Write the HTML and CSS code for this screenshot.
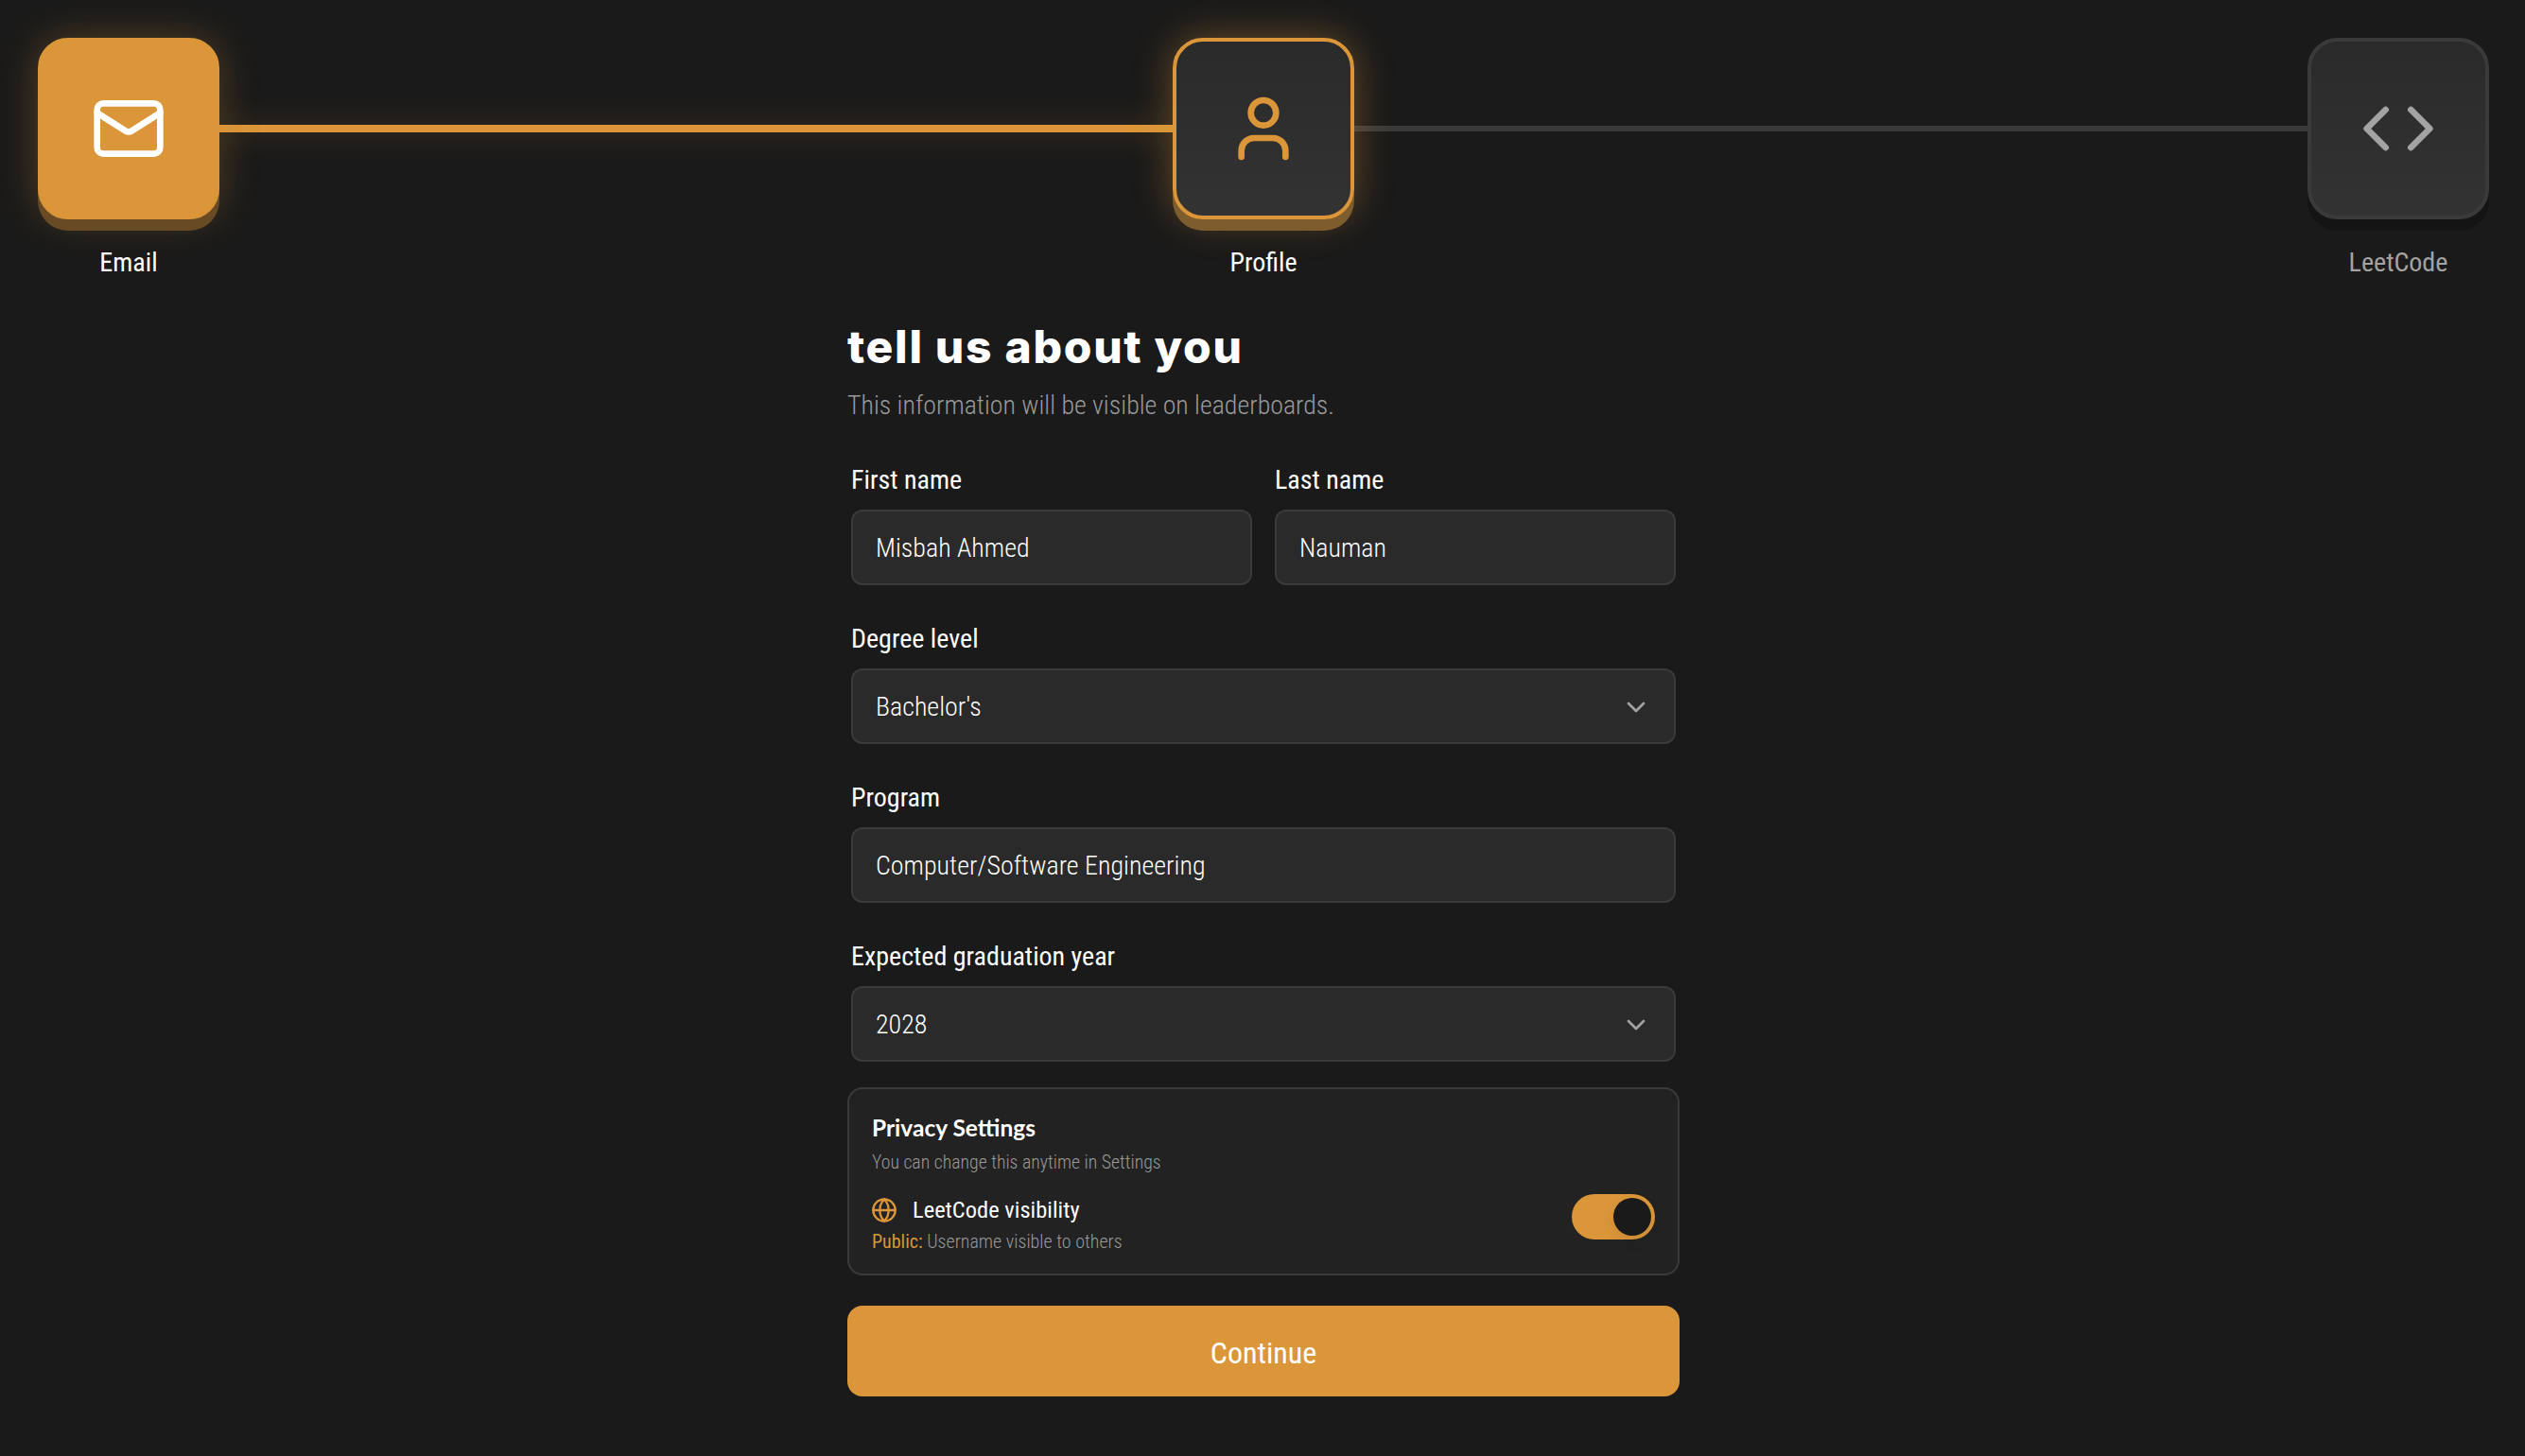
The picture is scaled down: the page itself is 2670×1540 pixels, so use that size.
FILE: index.html
```html
<!DOCTYPE html>
<html lang="en">
<head>
  <meta charset="UTF-8">
  <title>Onboarding</title>
  <link rel="stylesheet" href="styles.css">
</head>
<body>

<!-- Stepper -->
<div class="stepper">
  <div class="step done">
    <div class="step-box">
      <svg class="step-icon" viewBox="0 0 24 24"><rect width="20" height="16" x="2" y="4" rx="2"/><path d="m22 7-8.97 5.7a1.94 1.94 0 0 1-2.06 0L2 7"/></svg>
    </div>
    <div class="step-label">Email</div>
  </div>
  <div class="step-line active"></div>
  <div class="step current">
    <div class="step-box">
      <svg class="step-icon" viewBox="0 0 24 24"><path d="M19 21v-2a4 4 0 0 0-4-4H9a4 4 0 0 0-4 4v2"/><circle cx="12" cy="7" r="4"/></svg>
    </div>
    <div class="step-label">Profile</div>
  </div>
  <div class="step-line"></div>
  <div class="step">
    <div class="step-box">
      <svg class="step-icon" viewBox="0 0 24 24"><polyline points="16 18 22 12 16 6"/><polyline points="8 6 2 12 8 18"/></svg>
    </div>
    <div class="step-label">LeetCode</div>
  </div>
</div>

<div class="form-wrap">
  <h1>tell us about you</h1>
  <p class="subtitle">This information will be visible on leaderboards.</p>

  <div class="fields">
    <div class="field-row">
      <div class="field">
        <label>First name</label>
        <div class="input">Misbah Ahmed</div>
      </div>
      <div class="field">
        <label>Last name</label>
        <div class="input">Nauman</div>
      </div>
    </div>

    <div class="field">
      <label>Degree level</label>
      <div class="input select">
        Bachelor's
        <svg class="chevron" viewBox="0 0 24 24"><path d="m6 9 6 6 6-6"/></svg>
      </div>
    </div>

    <div class="field">
      <label>Program</label>
      <div class="input">Computer/Software Engineering</div>
    </div>

    <div class="field">
      <label>Expected graduation year</label>
      <div class="input select">
        2028
        <svg class="chevron" viewBox="0 0 24 24"><path d="m6 9 6 6 6-6"/></svg>
      </div>
    </div>
  </div>

  <!-- Privacy -->
  <div class="privacy">
    <h3>Privacy Settings</h3>
    <p class="privacy-note">You can change this anytime in Settings</p>
    <div class="privacy-row">
      <div>
        <div class="privacy-title">
          <svg class="globe" viewBox="0 0 24 24"><circle cx="12" cy="12" r="10"/><path d="M12 2a14.5 14.5 0 0 0 0 20 14.5 14.5 0 0 0 0-20"/><path d="M2 12h20"/></svg>
          LeetCode visibility
        </div>
        <div class="privacy-desc"><span class="public">Public:</span> Username visible to others</div>
      </div>
      <div class="toggle"><div class="knob"></div></div>
    </div>
  </div>

  <button class="continue">Continue</button>
</div>

</body>
</html>
```

FILE: styles.css
```css
body {
  margin: 0;
  padding: 40px 38px 40px 40px;
  height: 1540px;
  box-sizing: border-box;
  background: #1a1a1a;
  color: #fff;
  font-family: Roboto, sans-serif;
  font-stretch: 75%;
  overflow: hidden;
}

/* Stepper */
.stepper {
  display: flex;
  align-items: flex-start;
}
.step {
  width: 192px;
  flex-shrink: 0;
  display: flex;
  flex-direction: column;
  align-items: center;
  position: relative;
  z-index: 1;
}
.step-box {
  width: 192px;
  height: 192px;
  box-sizing: border-box;
  border: 4px solid #3a3a3a;
  border-radius: 32px;
  background: linear-gradient(180deg, #2a2a2a, #333);
  box-shadow: 0 12px 0 #141414;
  display: flex;
  align-items: center;
  justify-content: center;
}
.step-icon {
  width: 80px;
  height: 80px;
  fill: none;
  stroke: #a3a3a3;
  stroke-width: 2;
  stroke-linecap: round;
  stroke-linejoin: round;
}
.step-label {
  margin-top: 30px;
  font-size: 28px;
  line-height: 32px;
  color: #a3a3a3;
  white-space: nowrap;
}
.step-line {
  flex: 1;
  height: 6px;
  margin-top: 93px;
  background: #3a3a3a;
}
.step-line.active {
  height: 8px;
  margin-top: 92px;
  background: #db9639;
  box-shadow: 0 0 32px rgba(219,150,57,0.3);
}
.step.done .step-box {
  background: #db9639;
  border-color: #db9639;
  box-shadow: 0 12px 0 #684b25, 0 0 40px rgba(219,150,57,0.3);
}
.step.done .step-icon {
  stroke: #fff;
}
.step.done .step-label,
.step.current .step-label {
  color: #fff;
}
.step.current .step-box {
  border-color: #db9639;
  box-shadow: 0 12px 0 #7f5c2e, 0 0 40px rgba(219,150,57,0.4);
}
.step.current .step-icon {
  stroke: #db9639;
}

/* Form */
.form-wrap {
  width: 880px;
  margin: 0 auto;
  padding-top: 43px;
}
h1 {
  margin: 0;
  font-family: Inter, sans-serif;
  font-stretch: normal;
  font-size: 48px;
  line-height: 60px;
  font-weight: 800;
  letter-spacing: 1.7px;
}
.subtitle {
  margin: 16px 0 0;
  font-size: 27.9px;
  line-height: 32px;
  font-weight: 300;
  color: #999;
}
.fields {
  margin-top: 43px;
  padding: 0 4px;
  display: flex;
  flex-direction: column;
  gap: 37px;
}
.field-row {
  display: flex;
  gap: 24px;
}
.field {
  flex: 1;
  min-width: 0;
}
label {
  display: block;
  margin-bottom: 11px;
  font-size: 28px;
  line-height: 40px;
}
.input {
  height: 80px;
  box-sizing: border-box;
  padding: 2px 24px 0;
  border: 2px solid #3a3a3a;
  border-radius: 12px;
  background: #2a2a2a;
  display: flex;
  align-items: center;
  justify-content: space-between;
  font-size: 28px;
  line-height: 36px;
  font-weight: 300;
  color: #fff;
}
.chevron {
  width: 32px;
  height: 32px;
  fill: none;
  stroke: #a3a3a3;
  stroke-width: 2;
  stroke-linecap: round;
  stroke-linejoin: round;
}

/* Privacy */
.privacy {
  margin-top: 27px;
  height: 199px;
  box-sizing: border-box;
  padding: 25px 24px 0;
  border: 2px solid #3a3a3a;
  border-radius: 16px;
  background: #222;
}
h3 {
  margin: 0;
  font-family: Lato, sans-serif;
  font-stretch: normal;
  font-size: 24.5px;
  line-height: 32px;
  font-weight: 700;
}
.privacy-note {
  margin: 9px 0 0;
  font-size: 19.8px;
  line-height: 24px;
  font-weight: 300;
  color: #999;
}
.privacy-row {
  margin-top: 22px;
  display: flex;
  justify-content: space-between;
  align-items: flex-start;
}
.privacy-title {
  display: flex;
  align-items: center;
  gap: 16px;
  font-size: 24.5px;
  line-height: 32px;
}
.globe {
  width: 28px;
  height: 28px;
  margin-left: -1px;
  fill: none;
  stroke: #db9639;
  stroke-width: 2;
  stroke-linecap: round;
  stroke-linejoin: round;
}
.privacy-desc {
  margin-top: 3px;
  font-size: 20px;
  line-height: 28px;
  font-weight: 300;
  color: #999;
}
.public {
  font-weight: 400;
  color: #db9639;
}
.toggle {
  width: 88px;
  height: 48px;
  margin-top: -1px;
  box-sizing: border-box;
  padding: 4px;
  border-radius: 24px;
  background: #db9639;
  display: flex;
  justify-content: flex-end;
}
.knob {
  width: 40px;
  height: 40px;
  border-radius: 50%;
  background: #1a1a1a;
  box-shadow: 0 6px 16px rgba(0,0,0,0.08);
}

.continue {
  display: block;
  width: 100%;
  height: 96px;
  padding: 3px 0 0;
  margin-top: 32px;
  border: none;
  border-radius: 16px;
  background: #db9639;
  color: #fff;
  font-family: inherit;
  font-stretch: inherit;
  font-size: 32px;
  cursor: pointer;
}
```
